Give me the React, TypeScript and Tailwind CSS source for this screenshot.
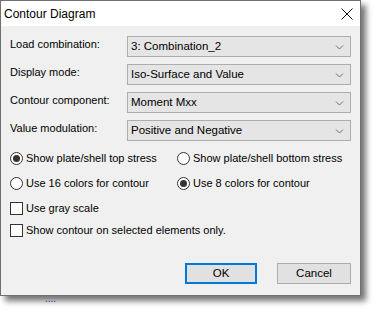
import React from 'react';

const FIELDS = [
  { label: 'Load combination:', value: '3: Combination_2' },
  { label: 'Display mode:', value: 'Iso-Surface and Value' },
  { label: 'Contour component:', value: 'Moment Mxx' },
  { label: 'Value modulation:', value: 'Positive and Negative' },
];

function Chevron() {
  return (
    <svg width="9" height="6" viewBox="0 0 9 6" className="block">
      <path d="M1 1.5 L4.5 5 L8 1.5" fill="none" stroke="#707070" strokeWidth="1" />
    </svg>
  );
}

function Combo({ value }: { value: string }) {
  return (
    <div className="w-[224px] h-[21px] bg-[#e5e5e5] border border-[#adadad] flex items-center justify-between pl-[3px] pr-[6px]">
      <span className="text-[11.5px] text-black leading-none">{value}</span>
      <Chevron />
    </div>
  );
}

function Radio({ checked, label }: { checked?: boolean; label: string }) {
  return (
    <div className="flex items-center gap-[3px]">
      <div className="w-[13px] h-[13px] rounded-full border border-[#333] bg-white flex items-center justify-center">
        {checked && <div className="w-[7px] h-[7px] rounded-full bg-[#333]" />}
      </div>
      <span className="text-[11px] leading-none text-black">{label}</span>
    </div>
  );
}

function Check({ label }: { label: string }) {
  return (
    <div className="flex items-center gap-[3px]">
      <div className="w-[13px] h-[13px] border border-[#333] bg-white" />
      <span className="text-[11px] leading-none text-black">{label}</span>
    </div>
  );
}

export default function App() {
  return (
    <div
      className="w-[376px] h-[312px] bg-white relative overflow-hidden"
      style={{ fontFamily: '"Liberation Sans", Arial, sans-serif' }}
    >
      <div className="absolute left-[45px] top-[294px] text-[10px] text-[#3b3bd0] leading-none">....</div>
      <div className="relative w-[361px] h-[296px] border border-[#707070] bg-[#f0f0f0] flex flex-col shadow-[5px_5px_6px_rgba(0,0,0,0.55)]">
        {/* title bar */}
        <div className="h-[25px] bg-white flex items-center justify-between pl-[3px] pr-[7px]">
          <span className="text-[12px] text-black">Contour Diagram</span>
          <svg width="12" height="12" viewBox="0 0 12 12">
            <path d="M0.5 0.5 L11.5 11.5 M11.5 0.5 L0.5 11.5" stroke="#111" strokeWidth="1" />
          </svg>
        </div>

        {/* fields */}
        <div className="flex flex-col gap-[7px] pt-[10px] pl-[9px] pr-[9px]">
          {FIELDS.map(f => (
            <div key={f.label} className="flex items-center justify-between">
              <span className="text-[11px] text-black leading-none -mt-[4px]">{f.label}</span>
              <Combo value={f.value} />
            </div>
          ))}
        </div>

        {/* options */}
        <div className="flex flex-col pl-[9px] mt-[9px]">
          <div className="flex h-[16px] items-center">
            <div className="w-[167px]"><Radio checked label="Show plate/shell top stress" /></div>
            <Radio label="Show plate/shell bottom stress" />
          </div>
          <div className="flex h-[16px] items-center mt-[9px]">
            <div className="w-[167px]"><Radio label="Use 16 colors for contour" /></div>
            <Radio checked label="Use 8 colors for contour" />
          </div>
          <div className="flex h-[16px] items-center mt-[9px]">
            <Check label="Use gray scale" />
          </div>
          <div className="flex h-[16px] items-center mt-[6px]">
            <Check label="Show contour on selected elements only." />
          </div>
        </div>

        {/* buttons */}
        <div className="flex justify-end gap-[20px] pr-[9px] mt-[25px]">
          <button className="w-[72px] h-[21px] bg-[#e1e1e1] border-2 border-[#0078d7] text-[11.5px] text-black leading-none">
            OK
          </button>
          <button className="w-[74px] h-[21px] bg-[#e1e1e1] border border-[#adadad] text-[11.5px] text-black leading-none">
            Cancel
          </button>
        </div>
      </div>
    </div>
  );
}
